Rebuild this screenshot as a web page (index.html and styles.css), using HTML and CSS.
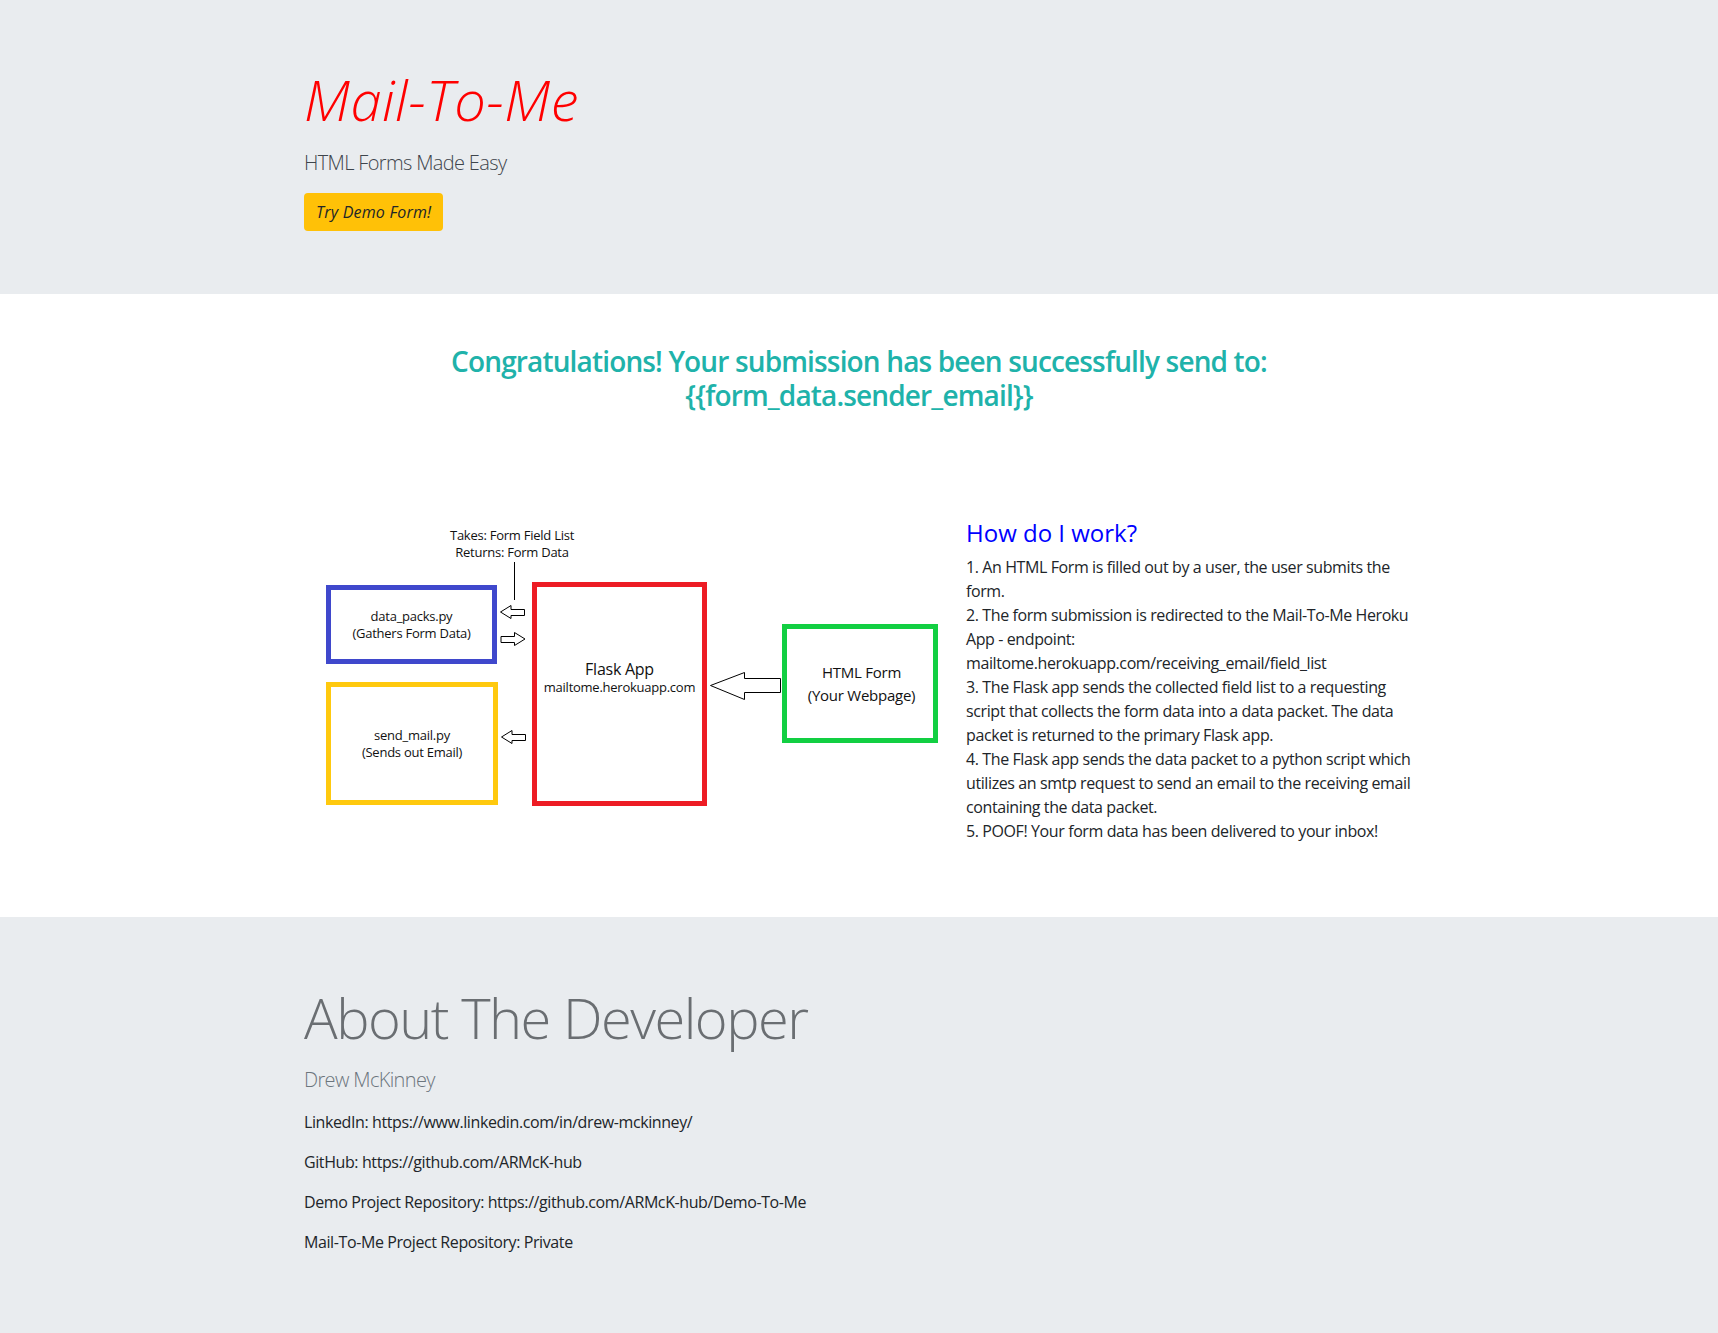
FILE: index.html
```html
<!DOCTYPE html>
<html lang="en">
<head>
<meta charset="utf-8">
<title>Mail-To-Me</title>
<link rel="stylesheet" href="styles.css">
</head>
<body>
<header class="hero top">
  <div class="container">
    <h1 class="display title">Mail-To-Me</h1>
    <p class="lead lead-dark">HTML Forms Made Easy</p>
    <a class="btn-warning" href="#">Try Demo Form!</a>
  </div>
</header>

<section class="result">
  <div class="container">
    <h3 class="congrats">Congratulations! Your submission has been successfully send to:<br>{{form_data.sender_email}}</h3>
    <div class="row">
      <div class="diagram-col">
        <div class="diagram">
          <div class="note">Takes: Form Field List<br>Returns: Form Data</div>
          <div class="vline"></div>
          <div class="box box-blue"><span>data_packs.py<br>(Gathers Form Data)</span></div>
          <div class="box box-yellow"><span>send_mail.py<br>(Sends out Email)</span></div>
          <div class="box box-red">
            <span class="flask-title">Flask App</span>
            <span class="flask-url">mailtome.herokuapp.com</span>
          </div>
          <div class="box box-green"><span>HTML Form<br>(Your Webpage)</span></div>
          <svg class="arrow arrow-top" width="26" height="15" viewBox="0 0 26 15"><polygon points="0.5,7 11,0.5 11,4.5 24.5,4.5 24.5,10.5 11,10.5 11,13.5" fill="#fff" stroke="#000" stroke-width="1"/></svg>
          <svg class="arrow arrow-mid" width="26" height="15" viewBox="0 0 26 15"><polygon points="25,7 14.5,0.5 14.5,4.5 1,4.5 1,10.5 14.5,10.5 14.5,13.5" fill="#fff" stroke="#000" stroke-width="1"/></svg>
          <svg class="arrow arrow-bot" width="26" height="15" viewBox="0 0 26 15"><polygon points="0.5,7 11,0.5 11,4.5 24.5,4.5 24.5,10.5 11,10.5 11,13.5" fill="#fff" stroke="#000" stroke-width="1"/></svg>
          <svg class="arrow arrow-big" width="72" height="30" viewBox="0 0 72 30"><polygon points="0.5,13.5 34.5,0.5 34.5,6.5 70.5,6.5 70.5,20.5 34.5,20.5 34.5,27.5" fill="#fff" stroke="#000" stroke-width="1"/></svg>
        </div>
      </div>
      <div class="info-col">
        <h4 class="how">How do I work?</h4>
        <p class="steps">
          <span>1. An HTML Form is filled out by a user, the user submits the</span>
          <span>form.</span>
          <span>2. The form submission is redirected to the Mail-To-Me Heroku</span>
          <span>App - endpoint:</span>
          <span>mailtome.herokuapp.com/receiving_email/field_list</span>
          <span>3. The Flask app sends the collected field list to a requesting</span>
          <span>script that collects the form data into a data packet. The data</span>
          <span>packet is returned to the primary Flask app.</span>
          <span>4. The Flask app sends the data packet to a python script which</span>
          <span>utilizes an smtp request to send an email to the receiving email</span>
          <span>containing the data packet.</span>
          <span>5. POOF! Your form data has been delivered to your inbox!</span>
        </p>
      </div>
    </div>
  </div>
</section>

<footer class="hero about">
  <div class="container">
    <h1 class="display muted">About The Developer</h1>
    <p class="lead lead-muted">Drew McKinney</p>
    <p>LinkedIn: https://www.linkedin.com/in/drew-mckinney/</p>
    <p>GitHub: https://github.com/ARMcK-hub</p>
    <p>Demo Project Repository: https://github.com/ARMcK-hub/Demo-To-Me</p>
    <p>Mail-To-Me Project Repository: Private</p>
  </div>
</footer>
</body>
</html>
```

FILE: styles.css
```css
* { box-sizing: border-box; }
html, body { margin: 0; padding: 0; }
body {
  font-family: "Open Sans", "Noto Sans", sans-serif;
  font-size: 16px;
  line-height: 1.5;
  letter-spacing: -0.4px;
  color: #212529;
  background: #fff;
}
.container {
  width: 1110px;
  margin: 0 auto;
}
.hero {
  background: #e9ecef;
}
.top { padding: 66px 0 63px; }
.about { padding: 67px 0 63px; }
.display {
  font-size: 56px;
  font-weight: 300;
  line-height: 1.2;
  margin: 0 0 15px;
}
.title {
  color: #ff0000;
  font-style: italic;
  letter-spacing: 0.5px;
}
.muted {
  color: #6a6e72;
  letter-spacing: -1.5px;
  margin-bottom: 14px;
}
.lead {
  font-size: 20px;
  font-weight: 300;
  letter-spacing: -0.65px;
  margin: 0 0 16px;
}
.lead-dark { color: #3e454c; margin-bottom: 15px; }
.lead-muted { color: #6c757d; margin-bottom: 15px; }
p { margin: 0 0 16px; }
.btn-warning {
  display: inline-block;
  background: #ffc107;
  color: #212529;
  font-style: italic;
  text-decoration: none;
  padding: 6px 12px;
  border-radius: 4px;
  line-height: 26px;
  font-size: 16px;
  letter-spacing: 0.2px;
}

.result {
  padding: 51px 0 58px;
}
.congrats {
  color: #20b2aa;
  font-size: 28px;
  font-weight: 600;
  line-height: 1.2;
  letter-spacing: -0.85px;
  text-align: center;
  margin: 0 0 8px;
}
.row {
  display: flex;
  margin-top: 107px;
}
.diagram-col { width: 662px; }
.diagram {
  position: relative;
  width: 620px;
  height: 290px;
  margin: 2px 0 0 22px;
  color: #111;
  font-size: 13px;
  line-height: 17px;
  letter-spacing: -0.25px;
}
.note {
  position: absolute;
  left: 106px;
  top: 6px;
  width: 160px;
  text-align: center;
}
.vline {
  position: absolute;
  left: 188px;
  top: 41px;
  width: 1px;
  height: 38px;
  background: #000;
}
.box {
  position: absolute;
  border: 5px solid;
  display: flex;
  align-items: center;
  justify-content: center;
  text-align: center;
  background: #fff;
}
.box-blue { border-color: #3f48cc; left: 0; top: 64px; width: 171px; height: 79px; }
.box-yellow { border-color: #ffc90e; left: 0; top: 161px; width: 172px; height: 123px; }
.box-red {
  border-color: #ed1c24;
  left: 206px; top: 61px; width: 175px; height: 224px;
  flex-direction: column;
  justify-content: flex-start;
  padding-top: 72px;
}
.flask-title { font-size: 16px; line-height: 20px; }
.flask-url { font-size: 13px; line-height: 17px; }
.box-green {
  border-color: #12cf42;
  left: 456px; top: 103px; width: 156px; height: 119px;
  font-size: 15px;
  line-height: 22.5px;
  padding-left: 3px;
}
.arrow { position: absolute; display: block; }
.arrow-top { left: 174px; top: 84px; }
.arrow-mid { left: 174px; top: 111px; }
.arrow-bot { left: 175px; top: 209px; }
.arrow-big { left: 384px; top: 151px; }

.info-col { width: 448px; }
.how {
  color: #0000ff;
  font-size: 24px;
  font-weight: 500;
  line-height: 1.2;
  letter-spacing: 0;
  margin: 0 0 7px;
}
.steps span { display: block; white-space: nowrap; }
```
